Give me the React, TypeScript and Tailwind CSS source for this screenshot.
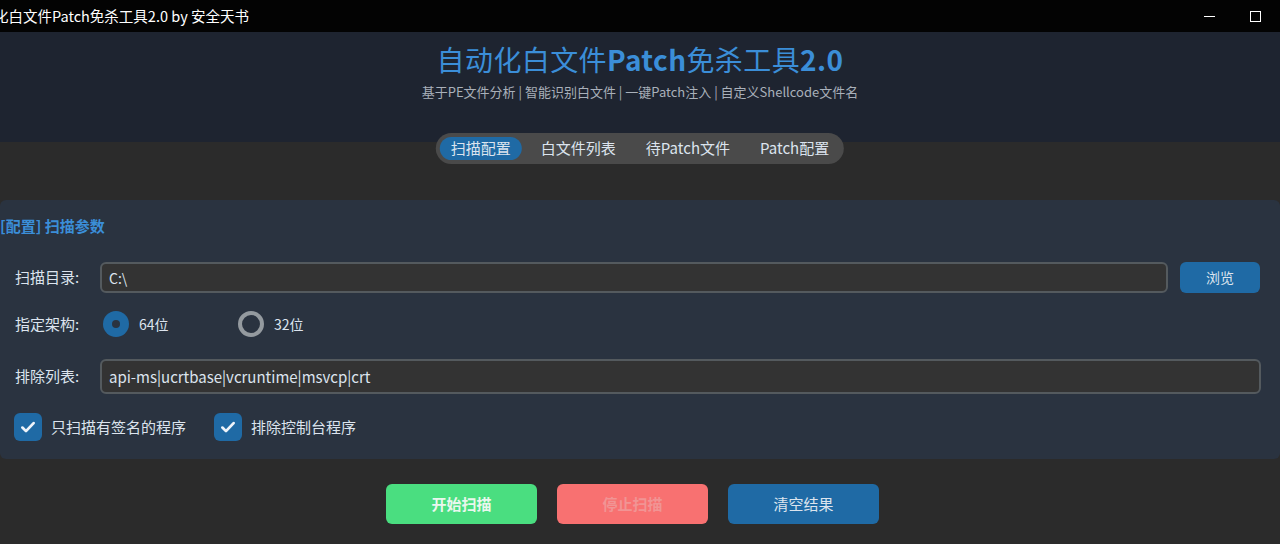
import React, { useState } from 'react';

const font = "font-['Microsoft_YaHei','Noto_Sans_CJK_SC',sans-serif]";

const Radio: React.FC<{ checked: boolean; label: string; onClick: () => void }> = ({ checked, label, onClick }) => (
  <button onClick={onClick} className="flex items-center gap-[10px] text-[14px] text-[#dce4ee]">
    {checked ? (
      <span className="w-[26px] h-[26px] rounded-full bg-[#1f6aa5] flex items-center justify-center">
        <span className="w-[8px] h-[8px] rounded-full bg-[#2a3340]" />
      </span>
    ) : (
      <span className="w-[26px] h-[26px] rounded-full border-[4px] border-[#949a9f]" />
    )}
    {label}
  </button>
);

const Check: React.FC<{ checked: boolean; label: string; onClick: () => void }> = ({ checked, label, onClick }) => (
  <button onClick={onClick} className="flex items-center gap-[9px] text-[15px] text-[#dce4ee]">
    <span className={`w-[28px] h-[28px] rounded-[6px] flex items-center justify-center ${checked ? 'bg-[#1f6aa5]' : 'border-2 border-[#949a9f]'}`}>
      {checked && (
        <svg width="18" height="18" viewBox="0 0 16 16" fill="none">
          <path d="M3 8.5l3.2 3.2L13 4.5" stroke="#eef4fa" strokeWidth="2.4" strokeLinecap="round" strokeLinejoin="round" />
        </svg>
      )}
    </span>
    {label}
  </button>
);

const App: React.FC = () => {
  const [tab, setTab] = useState(0);
  const [arch, setArch] = useState('64');
  const [signed, setSigned] = useState(true);
  const [noConsole, setNoConsole] = useState(true);
  const tabs = ['扫描配置', '白文件列表', '待Patch文件', 'Patch配置'];

  return (
    <div className={`w-[1280px] h-[544px] overflow-hidden bg-[#2b2b2b] flex flex-col ${font}`}>
      {/* title bar */}
      <div className="h-[32px] bg-[#030303] flex items-center justify-between shrink-0">
        <span className="text-[14.5px] text-white ml-[-6px] whitespace-nowrap">化白文件Patch免杀工具2.0 by 安全天书</span>
        <div className="flex items-center h-full">
          <div className="w-[46px] h-full flex items-center justify-center">
            <span className="w-[11px] h-px bg-white" />
          </div>
          <div className="w-[46px] h-full flex items-center justify-center mr-[2px]">
            <span className="w-[11px] h-[11px] border border-white" />
          </div>
        </div>
      </div>

      {/* header */}
      <div className="relative h-[110px] bg-[#1e2430] shrink-0 flex flex-col items-center pt-[9px]">
        <h1 className="text-[28px] leading-[36px] text-[#3b8ed8] tracking-[0.4px]">
          自动化白文件<span className="font-bold">Patch</span>免杀工具<span className="font-bold">2.0</span>
        </h1>
        <p className="mt-[5px] text-[13px] text-[#a9b0ba]">基于PE文件分析 | 智能识别白文件 | 一键Patch注入 | 自定义Shellcode文件名</p>
        <div className="absolute top-[101px] left-1/2 -translate-x-1/2 bg-[#4a4a4a] rounded-full h-[31px] px-[4px] flex items-center">
          {tabs.map((t, i) => (
            <button
              key={t}
              onClick={() => setTab(i)}
              className={`h-[23px] rounded-full px-[11px] text-[15px] whitespace-nowrap ${i === 0 ? 'mr-[4px]' : i === 3 ? 'ml-[4px]' : 'mx-[4px]'} ${tab === i ? 'bg-[#1f6aa5] text-[#dce4ee]' : 'text-[#dce4ee]'}`}
            >
              {t}
            </button>
          ))}
        </div>
      </div>

      <div className="h-[58px] shrink-0" />

      {/* config panel */}
      <div className="bg-[#2a3340] h-[259px] shrink-0 rounded-[6px] pt-[14px] pr-[20px]">
        <div className="text-[15px] font-bold text-[#3b8ed8] leading-[24px]">[配置] 扫描参数</div>

        <div className="mt-[24px] flex items-center">
          <span className="w-[100px] pl-[15px] text-[15px] text-[#dce4ee]">扫描目录:</span>
          <input
            defaultValue="C:\"
            className="flex-1 h-[31px] bg-[#333333] border-2 border-[#545a5e] rounded-[6px] px-[7px] text-[14px] text-[#dce4ee] outline-none"
          />
          <button className="ml-[12px] w-[80px] h-[31px] rounded-[6px] bg-[#1f6aa5] text-[14px] text-[#dce4ee]">浏览</button>
        </div>

        <div className="mt-[16px] flex items-center h-[30px]">
          <span className="w-[100px] pl-[15px] text-[15px] text-[#dce4ee]">指定架构:</span>
          <div className="w-[138px] pl-[3px]">
            <Radio checked={arch === '64'} label="64位" onClick={() => setArch('64')} />
          </div>
          <Radio checked={arch === '32'} label="32位" onClick={() => setArch('32')} />
        </div>

        <div className="mt-[20px] flex items-center mr-[-1px]">
          <span className="w-[100px] pl-[15px] text-[15px] text-[#dce4ee]">排除列表:</span>
          <input
            defaultValue="api-ms|ucrtbase|vcruntime|msvcp|crt"
            className="flex-1 h-[35px] bg-[#333333] border-2 border-[#545a5e] rounded-[6px] px-[7px] text-[15px] text-[#dce4ee] outline-none"
          />
        </div>

        <div className="mt-[19px] flex items-center pl-[14px] gap-[28px]">
          <Check checked={signed} label="只扫描有签名的程序" onClick={() => setSigned(!signed)} />
          <Check checked={noConsole} label="排除控制台程序" onClick={() => setNoConsole(!noConsole)} />
        </div>
      </div>

      {/* actions */}
      <div className="mt-[25px] flex justify-center gap-[20px] pr-[15px]">
        <button className="w-[151px] h-[40px] rounded-[6px] bg-[#4ade80] text-[15px] font-bold text-[#eaf7ee]">开始扫描</button>
        <button className="w-[151px] h-[40px] rounded-[6px] bg-[#f87171] text-[15px] font-bold text-[#f19494]" disabled>停止扫描</button>
        <button className="w-[151px] h-[40px] rounded-[6px] bg-[#1f6aa5] text-[15px] text-[#dce4ee]">清空结果</button>
      </div>
    </div>
  );
};

export default App;
